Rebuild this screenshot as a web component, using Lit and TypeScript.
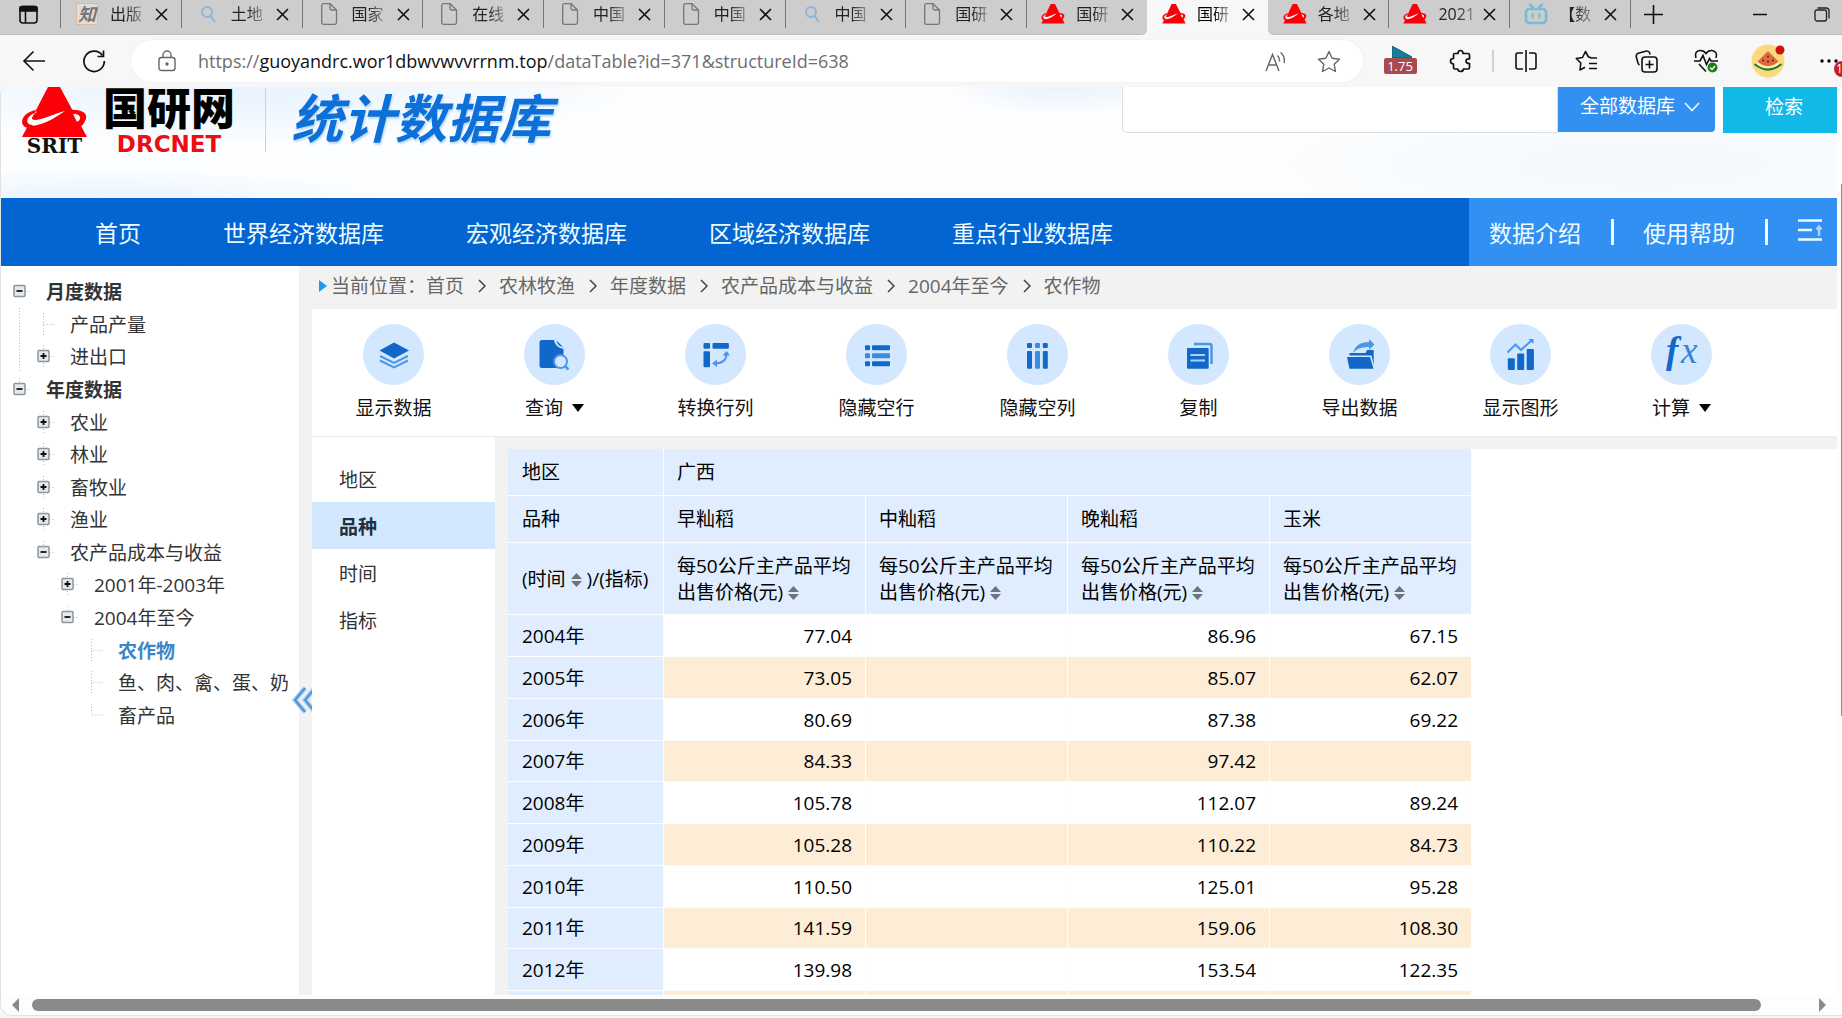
import { LitElement, html, svg, css, nothing } from "lit";
import { customElement, state } from "lit/decorators.js";
import { classMap } from "lit/directives/class-map.js";

const reset = css`
  * { box-sizing: border-box; }
  button, input, select { font: inherit; color: inherit; border: 0; padding: 0; margin: 0; background: none; border-radius: 0; outline: none; }
  a { color: inherit; text-decoration: none; }
  svg { display: block; flex: none; }
`;

const dark = "#1268c8";
const light = "#4a97e8";

const srit = svg`
  <path d="M27 0 H39 L66 50 H1 Z" fill="#fb0007"/>
  <path d="M14 24 C-1 28 -1 41 11 39 C26 37 36 29 44 24 C32 27 21 33 14 33 C9 33 10 28 16 25 Z" fill="#fff"/>
  <path d="M15 23 C-2 26 -3 42 10 41 L12 38 C4 38 4 30 14 26 Z" fill="#fb0007"/>
  <path d="M48 23 C62 22 68 27 64 34 C63 37 60 40 57 41 L55 37 C62 31 60 27 50 26 Z" fill="#fb0007"/>
  <path d="M52 27 C59 28 59 32 56 35 Z" fill="#fff"/>
`;

const favicons: Record<string, unknown> = {
  zhi: html`<span class="zhi">知</span>`,
  search: html`<svg width="22" height="22" viewBox="0 0 22 22" fill="none" stroke="#8db4d8" stroke-width="2"><circle cx="10" cy="9" r="5"/><path d="M13.500 13 L18 19"/></svg>`,
  page: html`<svg width="22" height="24" viewBox="0 0 22 24" fill="none" stroke="#777" stroke-width="1.300"><path d="M5.500 1.700 H12 L18.500 8 V20.500 Q18.500 22.300 16.700 22.300 H5.500 Q3.700 22.300 3.700 20.500 V3.500 Q3.700 1.700 5.500 1.700 Z"/><path d="M12 1.700 V6.500 Q12 8 13.500 8 H18.500"/></svg>`,
  srit: html`<svg width="24" height="20" viewBox="0 0 67 51" preserveAspectRatio="none">${srit}</svg>`,
  bili: html`<svg width="24" height="22" viewBox="0 0 24 22" fill="none" stroke="#74bfd6" stroke-width="2.500" stroke-linecap="round"><rect x="2" y="6" width="20" height="14" rx="3"/><path d="M6 1.500 L9.500 5 M18 1.500 L14.500 5 M8.500 11.500 V14 M15.500 11.500 V14"/></svg>`,
};

const tabs: { icon: string; title: string; active?: boolean }[] = [
  { icon: "zhi", title: "出版" },
  { icon: "search", title: "土地" },
  { icon: "page", title: "国家" },
  { icon: "page", title: "在线" },
  { icon: "page", title: "中国" },
  { icon: "page", title: "中国" },
  { icon: "search", title: "中国" },
  { icon: "page", title: "国研" },
  { icon: "srit", title: "国研" },
  { icon: "srit", title: "国研", active: true },
  { icon: "srit", title: "各地" },
  { icon: "srit", title: "2021" },
  { icon: "bili", title: "【数" },
];

@customElement("browser-tabs")
class BrowserTabs extends LitElement {
  static styles = [reset, css`
    :host { display: flex; height: 35px; background: #f7f7f7; font-size: 16px; color: #222; }
    .lead, .tab, .trail { background: #cdcdcd; border-bottom: 1px solid #bdbdbd; padding-bottom: 6px; display: flex; align-items: center; }
    .lead { width: 60px; padding-left: 19px; }
    .tab { flex: 1; min-width: 0; display: grid; grid-template-columns: 1px 14px 24px 11px 37px 8px 16px; align-items: center; }
    .sep { width: 1px; height: 28px; background: #777; }
    .icon { grid-column: 3; display: grid; place-items: center; }
    .title { grid-column: 5; justify-self: start; white-space: nowrap; line-height: 24px; -webkit-mask-image: linear-gradient(90deg, #000 50%, #0005); mask-image: linear-gradient(90deg, #000 50%, #0005); }
    .close { grid-column: 7; }
    .tab.active { background: #f7f7f7; border-bottom-color: #f7f7f7; color: #000; }
    .tab.active .sep, .tab.active + .tab .sep { visibility: hidden; }
    .tab.before { border-bottom-right-radius: 6px; }
    .tab.active + .tab { border-bottom-left-radius: 6px; }
    .trail { width: 212px; }
    .plus { width: 46px; display: grid; place-items: center; }
    .min { width: 64px; margin-left: auto; display: grid; place-items: center; }
    .max { width: 50px; padding-left: 22px; }
    .zhi { width: 22px; height: 22px; border: 1px solid #e0b8a0; background: #e2dcd6; color: #777; font-size: 18px; line-height: 20px; text-align: center; font-style: italic; font-weight: 700; }
  `];
  render() {
    return html`
      <div class="lead"><button aria-label="Tab actions"><svg width="19" height="19" viewBox="0 0 19 19" fill="none" stroke="#111" stroke-width="1.600"><rect x="1" y="1.500" width="17" height="16.500" rx="3"/><path d="M1 3 Q1 1.500 3 1.500 H16 Q18 1.500 18 3 V6 H1 Z" fill="#111"/><path d="M6.500 6 V18"/></svg></button></div>
      ${tabs.map((t, i) => html`
        <div class=${classMap({ tab: true, active: !!t.active, before: !!tabs[i + 1]?.active })}>
          <span class="sep"></span>
          <span class="icon">${favicons[t.icon]}</span>
          <span class="title">${t.title}</span>
          <button class="close" aria-label="Close tab"><svg width="13" height="13" viewBox="0 0 13 13" stroke="#111" stroke-width="1.600"><path d="M1 1 L12 12 M12 1 L1 12"/></svg></button>
        </div>`)}
      <div class="trail">
        <span class="sep"></span>
        <button class="plus" aria-label="New tab"><svg width="19" height="19" viewBox="0 0 19 19" stroke="#111" stroke-width="1.600"><path d="M9.500 0 V19 M0 9.500 H19"/></svg></button>
        <button class="min" aria-label="Minimize"><svg width="14" height="3" viewBox="0 0 14 3"><path d="M0 1.500 H14" stroke="#111" stroke-width="1.500"/></svg></button>
        <button class="max" aria-label="Restore"><svg width="16" height="15" viewBox="0 0 16 15" fill="none" stroke="#222" stroke-width="1.300"><rect x="1" y="3" width="11.500" height="11" rx="2"/><path d="M3.500 1 H12 Q15 1 15 4 V11.500"/></svg></button>
      </div>`;
  }
}

const bar = (label: string, icon: unknown) => html`<button class="cell" aria-label=${label}>${icon}</button>`;

@customElement("browser-toolbar")
class BrowserToolbar extends LitElement {
  static styles = [reset, css`
    :host { display: flex; align-items: center; height: 52px; padding-left: 4px; background: #f7f7f7; color: #111; overflow: hidden; }
    .cell { width: 60px; height: 40px; display: grid; place-items: center; flex: none; }
    .pill { flex: 1; display: flex; align-items: center; height: 42px; margin: 0 7px; padding: 0 8px 0 27px; border-radius: 21px; background: #fff; box-shadow: 0 0 2px #0001; }
    .url { flex: 1; min-width: 0; margin-left: 22px; height: 32px; font-size: 18px; font-family: "Open Sans", "Noto Sans", sans-serif; white-space: nowrap; line-height: 32px; color: #6e6e6e; }
    .host { color: #111; }
    .pill .cell { width: 53px; }
    .sep { width: 2px; height: 22px; margin: 0 2px; background: #cfcfcf; }
    .rate { display: flex; flex-direction: column; align-items: center; padding-top: 5px; }
    .rate svg { margin-left: 4px; }
    .rate span { width: 33px; height: 16px; border-radius: 2px; background: #a84b4f; color: #fff; font-size: 13px; line-height: 16px; font-family: "Open Sans", sans-serif; }
    .avatar { width: 64px; }
    .more { width: 42px; height: 40px; position: relative; }
    .more svg { margin-left: 20px; }
    .count { position: absolute; left: 34px; top: 20px; width: 16px; height: 16px; border-radius: 8px; background: #c8202a; color: #fff; font-size: 12px; line-height: 16px; padding-left: 2px; text-align: left; }
  `];
  render() {
    return html`
      ${bar("Back", html`<svg width="24" height="22" viewBox="0 0 24 22" fill="none" stroke="#111" stroke-width="1.600"><path d="M23 11 H2 M11.500 1.500 L2 11 L11.500 20.500"/></svg>`)}
      ${bar("Refresh", html`<svg width="24" height="24" viewBox="0 0 24 24" fill="none" stroke="#111" stroke-width="1.700"><path d="M20.500 6.500 A10.200 10.200 0 1 0 22.300 12"/><path d="M21.500 1.500 V7.500 H15.500"/></svg>`)}
      <div class="pill">
        <svg width="18" height="22" viewBox="0 0 18 22" fill="none" stroke="#666" stroke-width="1.400"><rect x="1" y="7.500" width="16" height="13" rx="2.500"/><path d="M5 7.500 V5 A4 4 0 0 1 13 5 V7.500"/><circle cx="9" cy="14" r="1" fill="#666"/></svg>
        <div class="url" role="textbox" contenteditable="true" spellcheck="false" aria-label="Address">https://<span class="host">guoyandrc.wor1dbwvwvvrrnm.top</span>/dataTable?id=371&amp;structureId=638</div>
        ${bar("Read aloud", html`<svg width="22" height="21" viewBox="0 0 22 21" fill="none" stroke="#666" stroke-width="1.400"><path d="M1 20 L7.500 3.500 L14 20 M3.500 14 H11.500 M12.500 4.500 Q15 7 14.500 10.500 M15.500 1.500 Q20.500 5.500 19 12"/></svg>`)}
        ${bar("Add to favorites", html`<svg width="24" height="23" viewBox="0 0 24 23" fill="none" stroke="#666" stroke-width="1.400" stroke-linejoin="round"><path d="M12 1.500 L15.200 8.200 L22.500 9.200 L17.200 14.300 L18.500 21.500 L12 18 L5.500 21.500 L6.800 14.300 L1.500 9.200 L8.800 8.200 Z"/></svg>`)}
      </div>
      <button class="cell rate" aria-label="Playback rate"><svg width="20" height="12" viewBox="0 0 20 12"><path d="M0 0 L20 11 V12 H0 Z" fill="#137f9e" stroke="#0b6179"/></svg><span>1.75</span></button>
      ${bar("Extensions", html`<svg width="23" height="24" viewBox="0 0 23 24" fill="none" stroke="#111" stroke-width="1.700" stroke-linejoin="round"><path d="M6 4.500 H9 Q9 1.500 11.500 1.500 Q14 1.500 14 4.500 H19 Q20.500 4.500 20.500 6 V10 Q17 9.500 17 12 Q17 14.500 20.500 14.500 V18.500 Q20.500 20 19 20 H14.500 Q14 22.500 11.500 22.500 Q9 22.500 8.800 20 H6 Q4.500 20 4.500 18.500 V15 Q1.500 15 1.500 12 Q1.500 9.500 4.500 9.500 V6 Q4.500 4.500 6 4.500 Z"/></svg>`)}
      <span class="sep"></span>
      ${bar("Split screen", html`<svg width="22" height="22" viewBox="0 0 22 22" fill="none" stroke="#111" stroke-width="1.600"><path d="M8 3 H3 Q1 3 1 5 V17 Q1 19 3 19 H8 M14 3 H19 Q21 3 21 5 V17 Q21 19 19 19 H14 M11 0 V22"/></svg>`)}
      ${bar("Favorites", html`<svg width="23" height="22" viewBox="0 0 23 22" fill="none" stroke="#111" stroke-width="1.600" stroke-linejoin="round"><path d="M16 7.500 L13.500 7 L10.500 1.500 L7.500 7.500 L1.300 8.500 L5.800 13 L5 20 L10 17.200 M15 8 H22 M14 13.500 H22 M14 18.500 H22"/></svg>`)}
      ${bar("Collections", html`<svg width="23" height="23" viewBox="0 0 23 23" fill="none" stroke="#111" stroke-width="1.600"><rect x="7" y="7" width="15" height="15" rx="3"/><path d="M14.500 10.500 V18.500 M10.500 14.500 H18.500 M4.500 15 Q3.500 14.500 3 13 L1.200 6.500 Q1 4 3.200 3.300 L11.500 1 Q14 .800 14.700 3 L15 4.500"/></svg>`)}
      ${bar("Browser essentials", html`<svg width="24" height="24" viewBox="0 0 24 24" fill="none" stroke="#111" stroke-width="1.600"><path d="M2 9 Q0 2 6 1.500 Q10 1.300 12 4.500 Q14 1.300 18 1.500 Q24 2.500 22 9 M0 12 H6 L9 6.500 L12.500 15.500 L15.500 9.500 L17 12 H24 M5 15 L12 22.500"/><circle cx="18.500" cy="18.500" r="5" fill="#138016" stroke="none"/><path d="M16 18.500 L18 20.500 L21 17" stroke="#fff" stroke-width="1.300"/></svg>`)}
      <button class="cell avatar" aria-label="Profile"><svg width="34" height="34" viewBox="0 0 34 34"><circle cx="17" cy="17" r="16.500" fill="#fbd97c"/><path d="M17 7 L27.500 17.500 Q22 22 17 22 Q12 22 6.500 17.500 Z" fill="#dd6a3c"/><path d="M3.500 20 Q17 31 30.500 20" fill="none" stroke="#1f7d3a" stroke-width="2.200"/><path d="M5 18.500 Q17 28.500 29 18.500" fill="none" stroke="#fff3cf" stroke-width="1.500"/><g fill="#5b2213"><circle cx="17" cy="12.500" r="1"/><circle cx="12" cy="16.500" r="1"/><circle cx="17" cy="17.500" r="1"/><circle cx="22" cy="16.500" r="1"/></g><circle cx="29" cy="6" r="4.500" fill="#cf1111"/></svg></button>
      <button class="more" aria-label="Settings and more"><svg width="18" height="4" viewBox="0 0 18 4"><circle cx="2" cy="2" r="1.700"/><circle cx="9" cy="2" r="1.700"/><circle cx="16" cy="2" r="1.700"/></svg><span class="count">1</span></button>`;
  }
}

@customElement("site-header")
class SiteHeader extends LitElement {
  static styles = [reset, css`
    :host { display: block; }
    .banner { display: flex; align-items: flex-start; height: 111px; padding-left: 20px; background:
      radial-gradient(ellipse 120px 30px at 1060px 0, #e9f2fd, transparent),
      radial-gradient(ellipse 420px 60px at 240px 0, #e6f2fd, transparent),
      radial-gradient(ellipse 300px 30px at 100px 100%, #e8f4fd, transparent),
      radial-gradient(ellipse 420px 80px at 1640px 70%, #f3f8fd, transparent), #fdfeff; }
    .mark { width: 67px; display: flex; flex-direction: column; align-items: center; color: #111; }
    .mark span { font: 700 20px/14px "DejaVu Serif", serif; margin-top: 1px; }
    .names { width: 134px; margin-left: 14px; display: flex; flex-direction: column; align-items: center; }
    .cn { font-size: 44px; font-weight: 900; line-height: 42px; color: #000; }
    .en { font: 700 23px/20px "DejaVu Sans", sans-serif; margin-top: 5px; color: #ee0d12; }
    .rule { width: 1px; height: 64px; margin: 1px 25px 0 29px; background: #c9d3dc; }
    .product { font-size: 52px; line-height: 62px; font-weight: 700; font-style: italic; color: #0c70d8; text-shadow: 1px 2px 2px #b9d8f6; }
    .search { display: flex; margin-left: auto; height: 46px; font-size: 19px; color: #fff; }
    .query { width: 436px; background: #fff; border: 1px solid #dbe0e4; border-top: 0; border-bottom-left-radius: 5px; color: #333; padding: 0 10px; }
    .scope { display: grid; grid-template-columns: 126px 31px; align-items: center; background: #3290f0; border-bottom-right-radius: 4px; height: 45px; }
    .scope select { grid-column: 1 / 3; grid-row: 1; height: 45px; padding: 0 40px 7px 22px; appearance: none; }
    .scope svg { grid-column: 2; grid-row: 1; margin-bottom: 6px; pointer-events: none; }
    .go { width: 114px; margin-left: 8px; padding: 0 0 8px 8px; background: #10b9e8; text-align: center; }
    nav { display: flex; height: 68px; padding-left: 53px; background: #0265d2; color: #effcff; font-size: 23px; }
    nav a { display: flex; align-items: center; }
    .item { padding: 0 41px; border-right: 1px solid #0a5fc4; margin-right: -1px; }
    .item:last-of-type { border-right: 0; }
    .side { display: flex; align-items: center; gap: 30px; margin-left: auto; width: 368px; padding-left: 20px; background: #3190f1; }
    .side i { width: 3px; height: 26px; background: #effcff; }
    .side i + a { margin-left: -1px; }
  `];
  render() {
    return html`
      <div class="banner">
        <div class="mark"><svg width="67" height="51" viewBox="0 0 67 51">${srit}</svg><span>SRIT</span></div>
        <div class="names"><span class="cn">国研网</span><span class="en">DRCNET</span></div>
        <span class="rule"></span>
        <span class="product">统计数据库</span>
        <form class="search" @submit=${(e: Event) => e.preventDefault()}>
          <input class="query" type="text" aria-label="检索">
          <div class="scope">
            <select aria-label="全部数据库"><option>全部数据库</option></select>
            <svg width="16" height="10" viewBox="0 0 16 10" fill="none" stroke="#e8f8ff" stroke-width="1.700"><path d="M1 1 L8 8.500 L15 1"/></svg>
          </div>
          <button class="go">检索</button>
        </form>
      </div>
      <nav>
        ${["首页", "世界经济数据库", "宏观经济数据库", "区域经济数据库", "重点行业数据库"].map((t) => html`<a class="item" href="#">${t}</a>`)}
        <div class="side">
          <a href="#">数据介绍</a><i></i><a href="#">使用帮助</a><i></i>
          <button aria-label="Menu"><svg width="24" height="26" viewBox="0 0 24 26" stroke="#effcff" stroke-width="2.500"><path d="M0 1.500 H24 M0 11 H14 M0 20.500 H24"/><path d="M21 17 V8 M18.500 10.500 L21 7.500 L23.500 10.500" stroke="#a9d4ff" stroke-width="2.500" fill="none"/></svg></button>
        </div>
      </nav>`;
  }
}

const treeRows: { t: string; level: number; box?: "+" | "-"; kind?: string }[] = [
  { t: "月度数据", level: 0, box: "-", kind: "root" },
  { t: "产品产量", level: 1 },
  { t: "进出口", level: 1, box: "+" },
  { t: "年度数据", level: 0, box: "-", kind: "root" },
  { t: "农业", level: 1, box: "+" },
  { t: "林业", level: 1, box: "+" },
  { t: "畜牧业", level: 1, box: "+" },
  { t: "渔业", level: 1, box: "+" },
  { t: "农产品成本与收益", level: 1, box: "-" },
  { t: "2001年-2003年", level: 2, box: "+" },
  { t: "2004年至今", level: 2, box: "-" },
  { t: "农作物", level: 3, kind: "current" },
  { t: "鱼、肉、禽、蛋、奶", level: 3 },
  { t: "畜产品", level: 3 },
];

@customElement("data-tree")
class DataTree extends LitElement {
  static styles = [reset, css`
    :host { display: block; position: relative; flex: none; width: 311px; border-right: 13px solid #f2f2f2; background: #fff; color: #333; font-size: 19px; }
    ul { list-style: none; margin: 9px 0 0; padding: 0; height: 456px; display: grid; grid-auto-rows: 1fr; }
    li { display: flex; align-items: center; padding-left: 6px; white-space: nowrap; }
    .pad { width: 24px; height: 32px; }
    .glyph { margin-right: 7px; }
    .root { font-weight: 700; }
    .current { font-weight: 700; color: #3c86c8; }
    .fold { position: absolute; left: 291px; top: 420px; }
  `];
  render() {
    return html`<ul>${treeRows.map((r, i) => html`
      <li class=${r.kind ?? nothing}>
        ${Array.from({ length: r.level }, (_, l) => html`<svg class="pad" width="24" height="32" viewBox="0 0 24 32" stroke="#bbb" stroke-dasharray="1 2">${l === 0 && i < 3 ? svg`<path d="M12.500 0 V32"/>` : nothing}</svg>`)}
        <svg class="glyph" width="32" height="32" viewBox="0 0 32 32">
          <path d=${i === treeRows.length - 1 ? "M12.500 5 V16 H24" : i === 0 ? "M12.500 16.500 H24" : r.box === "-" ? "M12.500 5 V16 M12.500 16.500 H24" : "M12.500 5 V28 M12.500 16.500 H24"} fill="none" stroke="#bbb" stroke-dasharray="1 2"/>
          ${r.box ? svg`<rect x="7" y="10.500" width="11" height="11" rx="1" fill="#e6e9ec" stroke="#8b979f" stroke-width="1.500"/><path d=${r.box === "+" ? "M9.500 16 H15.500 M12.500 13 V19" : "M9.500 16 H15.500"} stroke="#111" stroke-width="1.800"/>` : nothing}
        </svg>
        <a href="#">${r.t}</a>
      </li>`)}</ul>
      <button class="fold" aria-label="Collapse"><svg width="20" height="28" viewBox="0 0 20 28" fill="none"><g stroke="#a9d0f4" stroke-width="5"><path d="M13 2 L3 14 L13 26 M23 2 L13 14 L23 26"/></g><g stroke="#4a92d8" stroke-width="2"><path d="M13 2 L3 14 L13 26 M23 2 L13 14 L23 26"/></g></svg></button>`;
  }
}

const R = (x: number, y: number, w: number, h: number, c = dark) => svg`<rect x=${x} y=${y} width=${w} height=${h} rx="1" fill=${c}/>`;

const tools: { label: string; menu?: boolean; icon: unknown }[] = [
  { label: "显示数据", icon: svg`<path d="M31 18.500 L46 26.500 L31 34.500 L16.500 26.500 Z" fill=${dark}/><path d="M17 32 L31 39 L45 32 M17 36.500 L31 43.500 L45 36.500" fill="none" stroke=${light} stroke-width="2"/>` },
  { label: "查询", menu: true, icon: svg`<path d="M18 16 H30 Q31 23 39.500 25 V44 H18 Q15.500 44 15.500 41.500 V18.500 Q15.500 16 18 16 Z" fill=${dark}/><path d="M32.500 16.500 L39 23 Q33.500 22 32.500 16.500 Z" fill=${dark}/><circle cx="36.500" cy="37.500" r="6.500" fill="#d3e7fe" stroke=${light} stroke-width="2"/><path d="M41 42 L44.500 45.500" stroke=${light} stroke-width="2.500"/>` },
  { label: "转换行列", icon: svg`${R(18.500, 19, 6.500, 5.700)}${R(27.500, 19, 16.400, 5.700)}${R(18.500, 27.300, 6.500, 16)}<path d="M41.500 30 Q41.500 39 30 39.500" fill="none" stroke=${light} stroke-width="2"/><path d="M37.500 31.500 L41.500 27 L45 31.500 Z M32 35.500 L27 39.500 L32 43 Z" fill=${light}/>` },
  { label: "隐藏空行", icon: svg`${[21.300, 29.300, 37.300].map((y, i) => svg`${R(19, y, 5, 5, i === 1 ? "#3c8be0" : dark)}${R(26, y, 18, 5, i === 1 ? "#3c8be0" : dark)}`)}` },
  { label: "隐藏空列", icon: svg`${[20, 28, 35.800].map((x, i) => svg`${R(x, 19, 5, 5, i === 1 ? "#3c8be0" : dark)}${R(x, 27, 5, 17.700, i === 1 ? "#3c8be0" : dark)}`)}` },
  { label: "复制", icon: svg`<path d="M26 20 H41.500 Q43.500 20 43.500 22 V40" fill="none" stroke=${light} stroke-width="2.500"/>${R(19, 24, 21.700, 20.700)}<path d="M22.500 31 H37 M22.500 36.500 H37" stroke="#a9d2fb" stroke-width="2"/>` },
  { label: "导出数据", icon: svg`<path d="M24 29 Q27 18 40 18 V15 L45.500 20.500 L40 26 V23 Q29 22.500 24 29 Z" fill=${light}/><path d="M20.500 31.500 V29 H36.500 L38 26 H44.700 V41 L42.500 31.500 Z" fill=${dark}/><path d="M18 33 H41 L44.500 44.700 H20.500 Z" fill=${dark}/>` },
  { label: "显示图形", icon: svg`${R(17.800, 34.300, 7, 11.700)}${R(27.200, 29.500, 7, 16.500)}${R(36.700, 25, 7.200, 21)}<path d="M17.500 28.500 L25.500 20.500 L31 26 L42 16" fill="none" stroke=${light} stroke-width="2"/><path d="M38.500 15 H43.500 V20 Z" fill=${light}/>` },
  { label: "计算", menu: true, icon: svg`<g font-family="Liberation Serif, serif" font-style="italic" font-size="37"><text x="15" y="39" font-weight="700" fill=${dark}>f</text><text x="30" y="39" fill="#3583d8">x</text></g>` },
];

const heads = ["早籼稻", "中籼稻", "晚籼稻", "玉米"];
const data: [string, string, string, string, string][] = [
  ["2004年", "77.04", "", "86.96", "67.15"],
  ["2005年", "73.05", "", "85.07", "62.07"],
  ["2006年", "80.69", "", "87.38", "69.22"],
  ["2007年", "84.33", "", "97.42", ""],
  ["2008年", "105.78", "", "112.07", "89.24"],
  ["2009年", "105.28", "", "110.22", "84.73"],
  ["2010年", "110.50", "", "125.01", "95.28"],
  ["2011年", "141.59", "", "159.06", "108.30"],
  ["2012年", "139.98", "", "153.54", "122.35"],
  ["", "", "", "", ""],
];

@customElement("data-view")
class DataPanel extends LitElement {
  @state() private dimension = "品种";
  static styles = [reset, css`
    :host { display: flex; flex-direction: column; flex: 1; min-width: 0; background: #f2f2f2; font-size: 19px; color: #111; }
    .crumbs { display: flex; align-items: center; flex: none; height: 43px; padding: 0 0 4px 7px; color: #666; line-height: 28px; }
    .crumbs svg { margin-right: 4px; }
    .crumbs .gt { margin: 0 13px 0 14px; }
    .tools { display: flex; flex: none; height: 128px; padding: 15px 0 0 1px; background: #fff; border-bottom: 1px solid #ececec; }
    .tool { width: 161px; display: flex; flex-direction: column; align-items: center; }
    .disc { border-radius: 50%; background: #d3e7fe; }
    .label { display: flex; align-items: center; gap: 9px; margin-top: 9px; line-height: 28px; }
    .body { display: flex; flex: 1; min-height: 0; }
    .dims { width: 183px; flex: none; background: #fff; padding-top: 18px; color: #333; }
    .dim { display: block; width: 100%; height: 47px; padding-left: 27px; text-align: left; }
    .dim.on { background: #d3e7fe; font-weight: 700; color: #222f3d; }
    .grid { flex: 1; min-width: 0; margin: 12px 0 0 13px; background: #fff; }
    table { width: 964px; table-layout: fixed; border-collapse: separate; border-spacing: 0; color: #000; }
    .first { width: 156px; }
    th, td { padding: 0 13px; font-weight: 400; line-height: 26px; border: 1px solid #fcfdfe; border-width: 0 1px 1px 0; white-space: nowrap; }
    th:first-child { padding-left: 14px; }
    th { text-align: left; background: #dfedfe; }
    td { text-align: right; background: #fff; }
    .r1 th { height: 47px; } .r2 th { height: 47px; } .r3 th { height: 72px; }
    tbody th, tbody td { height: 42px; }
    tbody tr:nth-child(4n) > * { height: 41px; }
    tbody tr:nth-child(even) td { background: #fdecd6; }
    .sort { display: inline-block; vertical-align: -1px; margin: 0 5px; }
  `];
  private sort() {
    return html`<button class="sort" aria-label="Sort"><svg width="11" height="14" viewBox="0 0 11 14" fill="#6f7479"><path d="M5.500 0 L11 6 H0 Z M5.500 14 L0 8 H11 Z"/></svg></button>`;
  }
  render() {
    const path = ["首页", "农林牧渔", "年度数据", "农产品成本与收益", "2004年至今", "农作物"];
    return html`
      <div class="crumbs">
        <svg width="8" height="12" viewBox="0 0 8 12"><path d="M0 0 L8 6 L0 12 Z" fill="#1e9bea"/></svg>
        <span>当前位置：</span>
        ${path.map((p, i) => html`${i ? html`<svg class="gt" width="8" height="14" viewBox="0 0 8 14" fill="none" stroke="#444" stroke-width="1.500"><path d="M1 1 L7 7 L1 13"/></svg>` : nothing}<a href="#">${p}</a>`)}
      </div>
      <div class="tools">${tools.map((t) => html`
        <button class="tool"><svg class="disc" width="61" height="61" viewBox="0 0 61 61">${t.icon}</svg>
          <span class="label">${t.label}${t.menu ? html`<svg width="12" height="8" viewBox="0 0 12 8"><path d="M0 0 H12 L6 8 Z"/></svg>` : nothing}</span></button>`)}
      </div>
      <div class="body">
        <div class="dims">${["地区", "品种", "时间", "指标"].map((d) => html`<button class=${classMap({ dim: true, on: d === this.dimension })} @click=${() => (this.dimension = d)}>${d}</button>`)}</div>
        <div class="grid">
          <table>
            <colgroup><col class="first"><col><col><col><col></colgroup>
            <thead>
              <tr class="r1"><th>地区</th><th colspan="4">广西</th></tr>
              <tr class="r2"><th>品种</th>${heads.map((h) => html`<th>${h}</th>`)}</tr>
              <tr class="r3"><th>(时间${this.sort()})/(指标)</th>${heads.map(() => html`<th>每50公斤主产品平均<br>出售价格(元)${this.sort()}</th>`)}</tr>
            </thead>
            <tbody>${data.map((r) => html`<tr><th>${r[0]}</th>${r.slice(1).map((v) => html`<td>${v}</td>`)}</tr>`)}</tbody>
          </table>
        </div>
      </div>`;
  }
}

@customElement("app-root")
class AppRoot extends LitElement {
  static styles = [reset, css`
    :host { display: flex; flex-direction: column; height: 100vh; overflow: hidden; background: #f7f7f7; font-family: "Open Sans", "Noto Sans CJK SC", sans-serif; }
    browser-tabs, browser-toolbar { flex: none; }
    .page { flex: 1; min-height: 0; display: grid; grid-template: minmax(0, 1fr) 20px / minmax(0, 1fr) 5px; margin-bottom: 2px; border: 1px solid #e2e2e2; border-top: 0; border-right: 0; border-radius: 8px 0 0 12px; background: #fdfdfd; overflow: hidden; }
    .content { display: flex; flex-direction: column; min-height: 0; overflow: hidden; }
    .main { display: flex; flex: 1; min-height: 0; }
    .vbar { padding: 97px 0 0 4px; }
    .vthumb { height: 532px; background: #8a8a8a; }
    .hbar { display: flex; align-items: center; padding: 0 11px; }
    .hthumb { flex: 1; height: 12px; margin: 0 58px 0 13px; border-radius: 6px; background: #8a8a8a; }
  `];
  render() {
    return html`
      <browser-tabs></browser-tabs>
      <browser-toolbar></browser-toolbar>
      <div class="page">
        <div class="content">
          <site-header></site-header>
          <div class="main"><data-tree></data-tree><data-view></data-view></div>
        </div>
        <div class="vbar"><div class="vthumb"></div></div>
        <div class="hbar">
          <svg width="7" height="14" viewBox="0 0 7 14"><path d="M7 0 V14 L0 7 Z" fill="#8a8a8a"/></svg>
          <div class="hthumb"></div>
          <svg width="7" height="14" viewBox="0 0 7 14"><path d="M0 0 V14 L7 7 Z" fill="#8a8a8a"/></svg>
        </div>
      </div>`;
  }
}
